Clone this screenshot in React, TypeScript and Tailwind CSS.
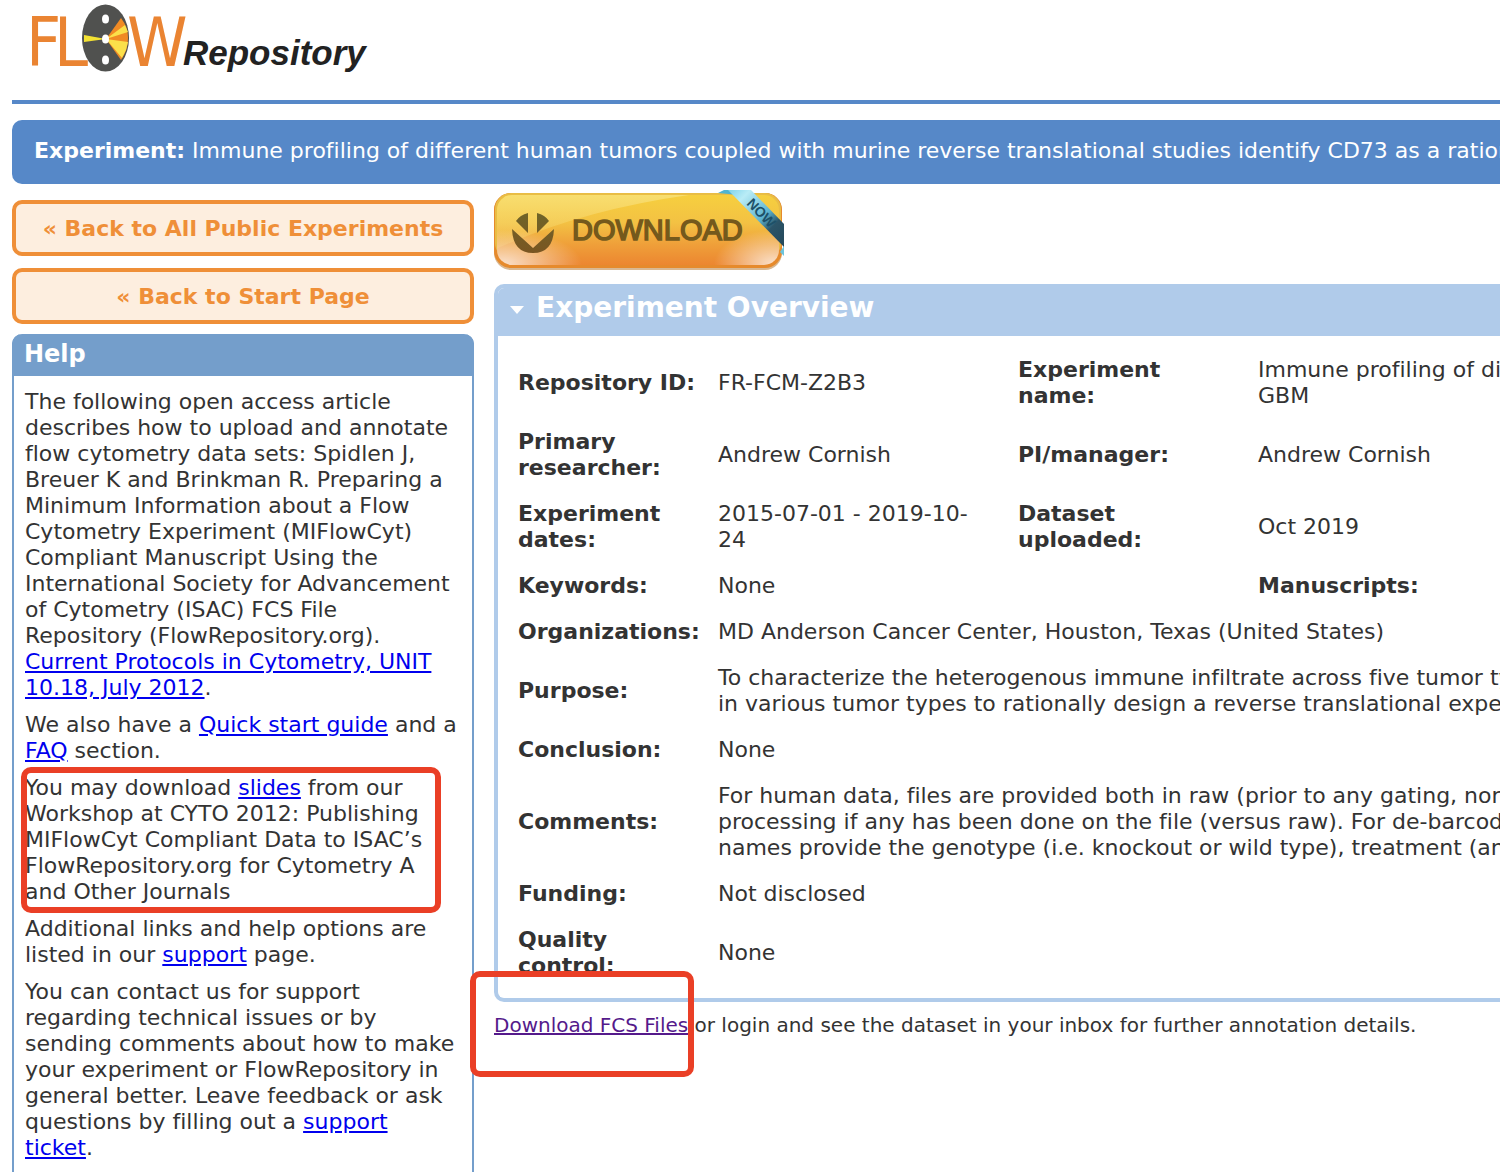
import type { ReactNode } from "react";

type ChildrenProps = {
  children: ReactNode;
};

type RowProps = {
  label: string;
  children: ReactNode;
};

const cell = "py-2.5 pr-5 pl-2.5 align-middle";
const heading = "px-2.5 py-2.5 text-left align-middle font-bold";

const Logo = () => (
  <svg className="block h-[100px] w-[380px]" viewBox="0 0 380 100" role="img" aria-label="FLOW Repository">
    <g fill="#ea8432" fontFamily="'DejaVu Sans Condensed', 'Liberation Sans', sans-serif">
      <text x="14" y="66" fontSize="68">
        F
      </text>
      <text x="42" y="66" fontSize="68">
        L
      </text>
      <text x="115" y="66" fontSize="68">
        W
      </text>
    </g>
    <ellipse cx="93.500" cy="38" rx="23.500" ry="33.500" fill="#50514f" />
    <path d="M94 39 L109 18 Q116 27 116 38 Q116 50 109 60 Z" fill="#f08a24" />
    <path d="M94 39 L113 25 L116 32 Z M94 39 L116 42 L114 50 L110 58 Z" fill="#fbe04a" />
    <path d="M94 39 L72 35 L72 42 Z" fill="#f3e233" />
    <ellipse cx="93.500" cy="39" rx="3.500" ry="4.500" fill="#fff" />
    <ellipse cx="93.500" cy="19" rx="3.500" ry="4.500" fill="#fff" />
    <ellipse cx="93.500" cy="60" rx="3.500" ry="4.500" fill="#fff" />
    <text
      x="171"
      y="65"
      fill="#222"
      fontFamily="'Liberation Sans', sans-serif"
      fontSize="35"
      fontStyle="italic"
      fontWeight="700"
    >
      Repository
    </text>
  </svg>
);

const DownloadButton = () => (
  <a href="#download" aria-label="Download now" className="block w-[290px]">
    <svg className="block h-20 w-[290px]" viewBox="0 0 290 80">
      <defs>
        <linearGradient id="face" x1="0" y1="0" x2="0" y2="1">
          <stop offset="0" stopColor="#f6cf3f" />
          <stop offset="0.4" stopColor="#f3c143" />
          <stop offset="0.7" stopColor="#efa03a" />
          <stop offset="1" stopColor="#ec8630" />
        </linearGradient>
        <linearGradient id="gloss" x1="0" y1="0" x2="0" y2="1">
          <stop offset="0" stopColor="#f8df72" />
          <stop offset="1" stopColor="#f6cd62" stopOpacity="0.2" />
        </linearGradient>
        <radialGradient id="glow">
          <stop offset="0" stopColor="#fff" stopOpacity="0.75" />
          <stop offset="1" stopColor="#fff" stopOpacity="0" />
        </radialGradient>
        <linearGradient id="ribbon" x1="0" y1="0" x2="1" y2="1">
          <stop offset="0" stopColor="#7fd4ea" />
          <stop offset="0.2" stopColor="#b9ecf6" />
          <stop offset="0.55" stopColor="#5db4d0" />
          <stop offset="0.72" stopColor="#2b5468" />
          <stop offset="1" stopColor="#25485a" />
        </linearGradient>
        <linearGradient id="ink" x1="0" y1="0" x2="0" y2="1">
          <stop offset="0" stopColor="#6f6428" />
          <stop offset="1" stopColor="#7a5622" />
        </linearGradient>
        <clipPath id="shape">
          <rect x="3" y="5" width="282" height="70" rx="15" />
        </clipPath>
      </defs>
      <rect x="0" y="3" width="288" height="77" rx="17" fill="#d9b892" />
      <rect x="0" y="3" width="288" height="75" rx="17" fill="#e68a2c" />
      <rect x="1" y="3" width="286" height="66" rx="16" fill="#e9bd45" />
      <g clipPath="url(#shape)">
        <rect x="3" y="5" width="282" height="70" fill="url(#face)" />
        <path d="M0 3 H210 Q90 18 0 60 Z" fill="url(#gloss)" />
        <ellipse cx="8" cy="74" rx="80" ry="34" fill="url(#glow)" />
        <ellipse cx="280" cy="74" rx="60" ry="34" fill="url(#glow)" />
      </g>
      <path
        d="M34 23 V43 L22 31 Q26 25 34 23 Z M43 23 V43 L55 31 Q51 25 43 23 Z M18 39 L39 58 L60 39 Q59 63 39 63 Q19 63 18 39 Z"
        fill="url(#ink)"
      />
      <text
        x="78"
        y="50"
        fill="#74591c"
        stroke="#74591c"
        strokeWidth="1.500"
        fontFamily="'Liberation Sans', sans-serif"
        fontSize="29"
      >
        DOWNLOAD
      </text>
      <path d="M224 3 L230 0 H240 L245 5 Z" fill="#4fb4d2" />
      <path d="M286 62 L290 66 V56 Z" fill="#6cc4dc" />
      <path d="M234 0 H257 L290 34 V57 Z" fill="url(#ribbon)" />
      <text
        transform="translate(252 14) rotate(46)"
        fill="#1d5068"
        fontFamily="'Liberation Sans', sans-serif"
        fontSize="14"
        fontWeight="700"
      >
        NOW
      </text>
    </svg>
  </a>
);

const BackLink = ({ children }: ChildrenProps) => (
  <a
    href="#back"
    className="flex h-14 items-center justify-center rounded-[10px] border-4 border-[#ef8f38] bg-[#fdeedf] pt-0.5 font-bold whitespace-nowrap text-[#ef8f38]"
  >
    {children}
  </a>
);

const HelpLink = ({ children }: ChildrenProps) => (
  <a href="#help" className="text-[#0000ee] underline">
    {children}
  </a>
);

const HelpPanel = () => (
  <section className="mt-2.5 rounded-t-[10px] border-x-2 border-[#749ecb] bg-white">
    <h2 className="-mx-0.5 h-[42px] rounded-t-[10px] bg-[#749ecb] px-3 text-2xl leading-[40px] font-bold text-white">
      Help
    </h2>
    <div className="space-y-[11px] px-[11px] py-[13px]">
      <p>
        The following open access article describes how to upload and annotate flow cytometry data sets: Spidlen J,
        Breuer K and Brinkman R. Preparing a Minimum Information about a Flow Cytometry Experiment (MIFlowCyt)
        Compliant Manuscript Using the International Society for Advancement of Cytometry (ISAC) FCS File Repository
        (FlowRepository.org). <HelpLink>Current Protocols in Cytometry, UNIT 10.18, July 2012</HelpLink>.
      </p>
      <p>
        We also have a <HelpLink>Quick start guide</HelpLink> and a <HelpLink>FAQ</HelpLink> section.
      </p>
      <div className="relative">
        <p>
          You may download <HelpLink>slides</HelpLink> from our Workshop at CYTO 2012: Publishing MIFlowCyt Compliant
          Data to ISAC’s FlowRepository.org for Cytometry A and Other Journals
        </p>
        <div className="pointer-events-none absolute -inset-y-2 right-5 -left-1 rounded-[10px] border-[6px] border-[#ea3f26]" />
      </div>
      <p>
        Additional links and help options are listed in our <HelpLink>support</HelpLink> page.
      </p>
      <p>
        You can contact us for support regarding technical issues or by sending comments about how to make your
        experiment or FlowRepository in general better. Leave feedback or ask questions by filling out a{" "}
        <HelpLink>support ticket</HelpLink>.
      </p>
    </div>
  </section>
);

const WideRow = ({ label, children }: RowProps) => (
  <tr>
    <th scope="row" className={heading}>
      {label}
    </th>
    <td colSpan={3} className={`${cell} whitespace-nowrap`}>
      {children}
    </td>
  </tr>
);

const Overview = () => (
  <section className="mt-3.5 overflow-hidden rounded-l-[10px] border-4 border-r-0 border-[#b0cbea] bg-white">
    <h2 className="flex h-12 items-center bg-[#b0cbea] pb-2 pl-3 text-[28px] leading-8 font-bold whitespace-nowrap text-white">
      <svg className="mt-1 mr-3 h-2 w-3.5" viewBox="0 0 14 8" aria-hidden="true">
        <path d="M0 0 H14 L7 8 Z" fill="#fff" />
      </svg>
      Experiment Overview
    </h2>
    <div className="px-2.5 pt-[11px] pb-[9px]">
      <table className="w-full min-w-[1200px] table-fixed">
        <colgroup>
          <col className="w-[200px]" />
          <col className="w-[300px]" />
          <col className="w-[240px]" />
          <col />
        </colgroup>
        <tbody>
          <tr>
            <th scope="row" className={`${heading} whitespace-nowrap`}>
              Repository ID:
            </th>
            <td className={cell}>FR-FCM-Z2B3</td>
            <th scope="row" className={heading}>
              Experiment
              <br />
              name:
            </th>
            <td className={`${cell} whitespace-nowrap`}>
              Immune profiling of different human tumors
              <br />
              GBM
            </td>
          </tr>
          <tr>
            <th scope="row" className={heading}>
              Primary researcher:
            </th>
            <td className={cell}>Andrew Cornish</td>
            <th scope="row" className={heading}>
              PI/manager:
            </th>
            <td className={cell}>Andrew Cornish</td>
          </tr>
          <tr>
            <th scope="row" className={heading}>
              Experiment dates:
            </th>
            <td className={cell}>2015-07-01 - 2019-10-24</td>
            <th scope="row" className={heading}>
              Dataset
              <br />
              uploaded:
            </th>
            <td className={cell}>Oct 2019</td>
          </tr>
          <tr>
            <th scope="row" className={heading}>
              Keywords:
            </th>
            <td className={cell}>None</td>
            <td className={cell} />
            <th scope="row" className={heading}>
              Manuscripts:
            </th>
          </tr>
          <WideRow label="Organizations:">MD Anderson Cancer Center, Houston, Texas (United States)</WideRow>
          <WideRow label="Purpose:">
            To characterize the heterogenous immune infiltrate across five tumor types
            <br />
            in various tumor types to rationally design a reverse translational experiment
          </WideRow>
          <WideRow label="Conclusion:">None</WideRow>
          <WideRow label="Comments:">
            For human data, files are provided both in raw (prior to any gating, normalization
            <br />
            processing if any has been done on the file (versus raw). For de-barcoded
            <br />
            names provide the genotype (i.e. knockout or wild type), treatment (and
          </WideRow>
          <WideRow label="Funding:">Not disclosed</WideRow>
          <tr>
            <th scope="row" className={heading}>
              Quality
              <br />
              control:
            </th>
            <td className={cell}>None</td>
          </tr>
        </tbody>
      </table>
    </div>
  </section>
);

export default function App() {
  return (
    <div className="overflow-hidden bg-white pl-3 font-['Verdana','DejaVu_Sans',sans-serif] text-[22px] leading-[26px] text-[#333] [font-variant-ligatures:none]">
      <header className="border-b-4 border-[#5688c8]">
        <Logo />
      </header>
      <h1 className="mt-4 h-16 overflow-hidden rounded-l-[10px] bg-[#5688c8] pl-[22px] leading-[62px] whitespace-nowrap text-white">
        <strong>Experiment:</strong> Immune profiling of different human tumors coupled with murine reverse translational
        studies identify CD73 as a rational target
      </h1>
      <div className="flex gap-5">
        <aside className="w-[462px] shrink-0 pt-4">
          <nav className="space-y-3">
            <BackLink>« Back to All Public Experiments</BackLink>
            <BackLink>« Back to Start Page</BackLink>
          </nav>
          <HelpPanel />
        </aside>
        <main className="min-w-0 flex-1 pt-1.5">
          <DownloadButton />
          <Overview />
          <p className="mt-2.5 text-xl leading-[26px] whitespace-nowrap">
            <span className="relative">
              <a href="#fcs" className="text-[#551a8b] underline">
                Download FCS Files
              </a>
              <span className="pointer-events-none absolute -top-[42px] -right-1.5 -bottom-10 -left-6 rounded-[10px] border-[6px] border-[#ea3f26]" />
            </span>{" "}
            or login and see the dataset in your inbox for further annotation details.
          </p>
        </main>
      </div>
    </div>
  );
}
